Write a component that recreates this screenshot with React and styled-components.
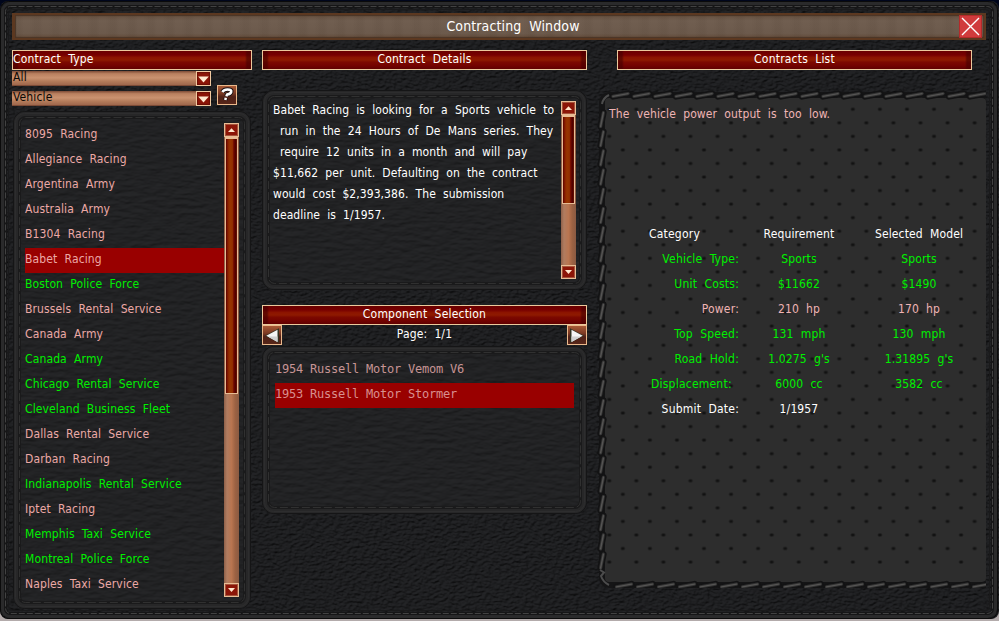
import React from "react";
import styled, { createGlobalStyle, css } from "styled-components";

const GlobalStyle = createGlobalStyle`
  * {
    box-sizing: border-box;
  }

  body {
    margin: 0;
    background: linear-gradient(#00061c 50%, #b3abab 50%);
    font-family: "DejaVu Sans Condensed", "DejaVu Sans", sans-serif;
    font-stretch: condensed;
    font-size: 12px;
    line-height: 21px;
    color: #fff;
  }
`;

const contracts = [
  ["8095 Racing", false],
  ["Allegiance Racing", false],
  ["Argentina Army", false],
  ["Australia Army", false],
  ["B1304 Racing", false],
  ["Babet Racing", false],
  ["Boston Police Force", true],
  ["Brussels Rental Service", false],
  ["Canada Army", false],
  ["Canada Army", true],
  ["Chicago Rental Service", true],
  ["Cleveland Business Fleet", true],
  ["Dallas Rental Service", false],
  ["Darban Racing", false],
  ["Indianapolis Rental Service", true],
  ["Iptet Racing", false],
  ["Memphis Taxi Service", true],
  ["Montreal Police Force", true],
  ["Naples Taxi Service", false],
];

const details = [
  "Babet Racing is looking for a Sports vehicle to",
  " run in the 24 Hours of De Mans series. They",
  " require 12 units in a month and will pay",
  "$11,662 per unit. Defaulting on the contract",
  "would cost $2,393,386. The submission",
  "deadline is 1/1957.",
];

const green = "#00f000";
const pink = "#f0b4b4";

const requirements = [
  ["Vehicle Type:", "Sports", "Sports", green],
  ["Unit Costs:", "$11662", "$1490", green],
  ["Power:", "210 hp", "170 hp", pink],
  ["Top Speed:", "131 mph", "130 mph", green],
  ["Road Hold:", "1.0275 g's", "1.31895 g's", green],
  ["Displacement: ", "6000 cc", "3582 cc", green],
  ["Submit Date:", "1/1957", "", "#fff"],
];

const Window = styled.div`
  position: relative;
  width: 999px;
  height: 621px;
  padding: 13px 13px 0 12px;
  overflow: hidden;
  white-space: pre;
  letter-spacing: 0.13px;
  word-spacing: 3.6px;
`;

const Backdrop = styled.svg`
  position: absolute;
  top: 0;
  left: 0;
  z-index: -1;
  display: block;
`;

const TitleBar = styled.div`
  display: flex;
  justify-content: flex-end;
  height: 27px;
  padding: 0 2px 0 0;
  border: 2px solid #5c3820;
  border-left-width: 3px;
  box-shadow: inset 1px 1px 1px #4a3526, inset -1px -1px 1px #4a3526;
  background: repeating-linear-gradient(
      90deg,
      rgba(40, 25, 15, 0.05) 0 5px,
      transparent 9px 14px,
      rgba(40, 25, 15, 0.04) 19px
    ),
    linear-gradient(#66503f, #705e50 25%, #6c5a4c 80%, #624b3a);
`;

const Title = styled.h1`
  flex: 1;
  margin: 0;
  padding-left: 52px;
  font-size: 14px;
  font-weight: normal;
  line-height: 23px;
  text-align: center;
`;

const Close = styled.button`
  width: 23px;
  height: 23px;
  padding: 0;
  border: 1px solid #b42a2a;
  background: #d03b3c;

  svg {
    display: block;
  }
`;

const Columns = styled.div`
  display: flex;
  align-items: flex-start;
  margin-top: 10px;
`;

const LeftColumn = styled.div`
  width: 240px;
`;

const MiddleColumn = styled.div`
  width: 325px;
  margin-left: 10px;
`;

const RightColumn = styled.div`
  width: 389px;
  margin-left: 10px;
`;

const Header = styled.h2`
  height: 20px;
  margin: 0;
  border: 1px solid #ecc99c;
  background: linear-gradient(
      90deg,
      rgba(70, 0, 0, 0.6) 0 4px,
      rgba(70, 0, 0, 0) 6px calc(100% - 6px),
      rgba(70, 0, 0, 0.6) calc(100% - 4px)
    ),
    linear-gradient(#6a0000, #780000 22%, #8c1400 36%, #8e1a00 50%, #7c0900 62%, #740300 80%, #600000);
  font-size: 12px;
  font-weight: normal;
  line-height: 17px;
  letter-spacing: 0.2px;
  text-align: ${(p) => (p.$left ? "left" : "center")};
`;

const ListHeader = styled(Header)`
  width: 355px;
  margin-left: 20px;
`;

const Filters = styled.div`
  display: flex;
  height: 41px;
`;

const Selects = styled.div`
  width: 199px;
  padding-top: 1px;
`;

const Select = styled.div`
  display: flex;
  justify-content: space-between;
  height: 15px;
  margin-bottom: 5px;
  padding-left: 1px;
  background: linear-gradient(#7c4a36, #b9805f 18%, #ca9270 45%, #b27a59 70%, #a16a4e 90%, #6a3b2a);
  color: #0c0805;
  line-height: 12px;
`;

const SelectArrow = styled.span`
  width: 15px;
  height: 15px;
  border: 1px solid #f0c9a0;
  background: #8b1507;
  box-shadow: inset 0 0 1px 1px #6b0e05;

  svg {
    display: block;
  }
`;

const IconButton = styled.button`
  width: 20px;
  height: 20px;
  padding: 0;
  border: 1px solid #eab98c;
  background: linear-gradient(#a95a35, #7c3a24 40%, #4f2117 60%, #572619);

  svg {
    display: block;
  }
`;

const HelpButton = styled(IconButton)`
  margin: 15px 0 0 6px;
`;

const Panel = styled.div`
  position: relative;
  display: flex;
  justify-content: space-between;
`;

const ContractPanel = styled(Panel)`
  width: 238px;
  height: 498px;
  padding: 12px 12px 0 12px;
  margin-left: 1px;
`;

const DetailPanel = styled(Panel)`
  height: 200px;
  margin-top: 20px;
  padding: 11px 11px 0 11px;
`;

const ComponentPanel = styled(Panel)`
  height: 168px;
  margin-top: 1px;
  padding: 12px 13px 0 13px;
`;

const RequirementPanel = styled(Panel)`
  flex-direction: column;
  justify-content: flex-start;
  height: 498px;
  margin-top: 20px;
  padding: 14px 0 0 12px;
`;

const List = styled.ul`
  flex: 1;
  margin: 0;
  padding: 0;
  list-style: none;
`;

const Item = styled.li`
  height: 25px;
  color: ${(p) => (p.$open ? green : "#eca9a6")};
  line-height: 23px;
  ${(p) => p.$selected && "background: #990000;"}
`;

const ComponentItem = styled(Item)`
  color: ${(p) => (p.$selected ? "#d88f8f" : "#c79494")};
  font-family: "DejaVu Sans Mono", monospace;
  font-stretch: normal;
  letter-spacing: -0.224px;
  word-spacing: 0;
`;

const Bar = styled.div`
  display: flex;
  flex-direction: column;
  width: 15px;
  height: ${(p) => p.$height}px;
  background: linear-gradient(90deg, #8e6049, #b07c60 20%, #b97550 50%, #9c6243 75%, #8a5a42);
`;

const BarArrow = styled.span`
  flex: none;
  height: 14px;
  border: 1px solid #e8bd95;
  background: #8b1507;
  box-shadow: inset 0 0 0 1px #a6523a;

  svg {
    display: block;
  }
`;

const Thumb = styled.span`
  height: ${(p) => p.$height}px;
  margin: 0 1px auto;
  border: 1px solid #e8bd95;
  border-top-width: 2px;
  background: linear-gradient(90deg, #5c0000, #8b2000 18%, #983500 35%, #923000 58%, #740a00 70%, #4e0000 85%, #6b1200);
`;

const Details = styled.div`
  margin-top: -1px;
  letter-spacing: 0.075px;
`;

const Line = styled.p`
  margin: 0;
`;

const Pager = styled.div`
  display: flex;
  justify-content: space-between;
  height: 20px;
  line-height: 18px;
`;

const ComponentHeader = styled(Header)`
  margin-top: 15px;
`;

const Table = styled.div`
  display: grid;
  grid-template-columns: 120px 120px 120px;
  grid-auto-rows: 25px;
  margin: 99px 0 0 10px;
  text-align: center;
`;

const Message = styled.p`
  margin: 0;
  color: ${pink};
`;

const cell = css`
  color: ${(p) => p.$color || "#fff"};
`;

const Label = styled.span`
  ${cell}
  letter-spacing: 0.22px;
  text-align: right;
`;

const Value = styled.span`
  ${cell}
`;

const CategoryLabel = styled(Label)`
  padding-right: 39px;
`;

function Leather() {
  return (
    <Backdrop width="999" height="621" viewBox="0 0 999 621">
      <defs>
        <filter id="leather" x="0" y="0" width="100%" height="100%" colorInterpolationFilters="sRGB">
          <feTurbulence type="fractalNoise" baseFrequency="0.22 0.4" numOctaves="4" seed="8" result="n" />
          <feDiffuseLighting in="n" surfaceScale="1.7" diffuseConstant="0.2" lightingColor="#b2b6c2">
            <feDistantLight azimuth="60" elevation="58" />
          </feDiffuseLighting>
        </filter>
        <clipPath id="window">
          <rect x="0" y="1" width="999" height="618" rx="8" />
        </clipPath>
      </defs>
      <g clipPath="url(#window)">
        <rect width="999" height="621" filter="url(#leather)" />
        <g fill="none">
          <rect x="0.5" y="1.5" width="997" height="617" rx="8" stroke="#0b0b0b" />
          <rect x="2.5" y="3.5" width="993" height="613" rx="8" stroke="#2a2a2b" strokeWidth="3" />
          <rect x="5.5" y="6.5" width="987" height="607" rx="5" stroke="#161617" strokeWidth="3" />
          <rect x="5.5" y="6.5" width="987" height="607" rx="5" stroke="#424242" strokeDasharray="6 2" />
          <rect x="8.5" y="9.5" width="981" height="601" rx="4" stroke="#1a1a1b" />
        </g>
      </g>
    </Backdrop>
  );
}

function SoftFrame({ width, height }) {
  return (
    <Backdrop width={width} height={height}>
      <defs>
        <filter id={`soft${height}`} x="0" y="0" width="100%" height="100%" colorInterpolationFilters="sRGB">
          <feTurbulence type="fractalNoise" baseFrequency="0.08 0.25" numOctaves="3" seed="3" result="n" />
          <feDiffuseLighting in="n" surfaceScale="0.9" diffuseConstant="0.215" lightingColor="#b4b7c0">
            <feDistantLight azimuth="70" elevation="60" />
          </feDiffuseLighting>
        </filter>
        <clipPath id={`clip${height}`}>
          <rect width={width} height={height} rx="12" />
        </clipPath>
      </defs>
      <g clipPath={`url(#clip${height})`}>
        <rect width={width} height={height} filter={`url(#soft${height})`} />
      </g>
      <g fill="none">
        <rect x="0.5" y="0.5" width={width - 1} height={height - 1} rx="11" stroke="#151516" />
        <rect x="3" y="3" width={width - 6} height={height - 6} rx="9" stroke="#272728" strokeWidth="4" />
        <rect x="2.5" y="2.5" width={width - 5} height={height - 5} rx="9" stroke="#2d2d2e" strokeWidth="1" />
        <rect x="6.5" y="6.5" width={width - 13} height={height - 13} rx="6" stroke="#1a1a1b" strokeWidth="3" />
        <rect x="6.5" y="6.5" width={width - 13} height={height - 13} rx="6" stroke="#303030" strokeDasharray="8 3" />
      </g>
    </Backdrop>
  );
}

function Stitch({ x, y, vertical }) {
  const d = vertical ? "M-1.4 7.5 L1.4 -6.5" : "M-8 1.4 L7 -1.4";
  return (
    <g transform={`translate(${x} ${y})`} fill="none" strokeLinecap="round">
      <path d={d} stroke="#131314" strokeWidth="6.5" />
      <path d={d} stroke="#333" strokeWidth="3.2" />
      <path d={d} stroke="#555453" strokeWidth="1.4" />
    </g>
  );
}

function PerforatedFrame() {
  const holes = (id, y) => (
    <pattern id={id} x="-1.2" y={y} width="27.06" height="27.1" patternUnits="userSpaceOnUse">
      <ellipse cx="13.5" cy="6.8" rx="2.5" ry="2" fill="#212121" />
      <ellipse cx="13.5" cy="6.8" rx="1.6" ry="1.2" fill="#121212" />
    </pattern>
  );
  const steps = (n) => Array.from({ length: n }, (_, i) => i);
  return (
    <Backdrop width="389" height="498">
      <defs>
        {holes("holesTop", 12.5)}
        {holes("holesBottom", 248.5)}
      </defs>
      <rect x="2" y="2" width="387" height="496" rx="10" fill="#151516" />
      <rect x="8" y="8" width="381" height="484" rx="4" fill="#2d2d2d" />
      <rect x="8" y="12" width="381" height="233" fill="url(#holesTop)" />
      <rect x="8" y="246" width="381" height="236" fill="url(#holesBottom)" />
      <g transform="translate(13.53 13.55)">
        <rect x="-5" y="-8" width="380.4" height="226" fill="url(#holesTop)" />
        <rect x="-5" y="234" width="380.4" height="233" fill="url(#holesBottom)" />
      </g>
      {steps(18).map((i) => (
        <Stitch key={i} x={24 + i * 21} y={5} />
      ))}
      {steps(18).map((i) => (
        <Stitch key={i} x={27.5 + i * 21} y={495.5} />
      ))}
      {steps(24).map((i) => (
        <Stitch key={i} x={5} y={29 + i * 19.2} vertical />
      ))}
      <path d="M5 14 Q6 8 12 5" fill="none" stroke="#4c4c4c" strokeWidth="2" />
      <path d="M3 480 L7 482.5 L4 486 Q6 492 12 495" fill="none" stroke="#4c4c4c" strokeWidth="2" />
    </Backdrop>
  );
}

function ScrollBar({ height, thumb }) {
  return (
    <Bar $height={height}>
      <BarArrow>
        <svg width="13" height="12">
          <path d="M3 8 L6.5 4.2 L10 8 Z" fill="#ffe6cc" />
        </svg>
      </BarArrow>
      <Thumb $height={thumb} />
      <BarArrow>
        <svg width="13" height="12">
          <path d="M3 4 L6.5 8 L10 4 Z" fill="#ffe6cc" />
        </svg>
      </BarArrow>
    </Bar>
  );
}

function Dropdown({ value }) {
  return (
    <Select>
      {value}
      <SelectArrow>
        <svg width="13" height="13">
          <path d="M1.2 4.4 H11.8 L6.5 10.4 Z" fill="#ffe9cf" />
        </svg>
      </SelectArrow>
    </Select>
  );
}

function Arrow({ right }) {
  return (
    <IconButton>
      <svg width="18" height="18">
        <g transform={right ? "translate(18 0) scale(-1 1)" : undefined}>
          <path d="M2 9.8 L16 2.2 V17 Z" fill="#332" />
          <path d="M3.3 9.8 L14.5 3.8 V16 Z" fill="#f5f5f5" />
          <path d="M5 10.5 L14.5 10.5 V16 Z" fill="#d0d0d0" />
        </g>
      </svg>
    </IconButton>
  );
}

export default function App() {
  return (
    <Window>
      <GlobalStyle />
      <Leather />
      <TitleBar>
        <Title>Contracting Window</Title>
        <Close>
          <svg width="21" height="21">
            <path d="M2 2 L19 19 M19 2 L2 19" stroke="#fff" strokeWidth="1.4" />
          </svg>
        </Close>
      </TitleBar>
      <Columns>
        <LeftColumn>
          <Header $left>Contract Type</Header>
          <Filters>
            <Selects>
              <Dropdown value="All" />
              <Dropdown value="Vehicle" />
            </Selects>
            <HelpButton>
              <svg width="18" height="18">
                <g fill="none" strokeLinejoin="round">
                  <path d="M4.3 6 Q6 3.5 9.5 3.5 Q14 3.5 13.2 6 Q12.6 8 9 8.6 L8.4 10.3 M7.8 12 L7.3 14" stroke="#1c1416" strokeWidth="4.4" />
                  <path d="M4.3 6 Q6 3.5 9.5 3.5 Q14 3.5 13.2 6 Q12.6 8 9 8.6 L8.4 10.3 M7.8 11.8 L7.3 14" stroke="#fff" strokeWidth="2.5" />
                </g>
              </svg>
            </HelpButton>
          </Filters>
          <ContractPanel>
            <SoftFrame width={238} height={498} />
            <List>
              {contracts.map(([name, open], i) => (
                <Item key={i} $open={open} $selected={i === 5}>
                  {name}
                </Item>
              ))}
            </List>
            <ScrollBar height={474} thumb={257} />
          </ContractPanel>
        </LeftColumn>
        <MiddleColumn>
          <Header>Contract Details</Header>
          <DetailPanel>
            <SoftFrame width={325} height={200} />
            <Details>
              {details.map((line) => (
                <Line key={line}>{line}</Line>
              ))}
            </Details>
            <ScrollBar height={178} thumb={89} />
          </DetailPanel>
          <ComponentHeader>Component Selection</ComponentHeader>
          <Pager>
            <Arrow />
            Page: 1/1
            <Arrow right />
          </Pager>
          <ComponentPanel>
            <SoftFrame width={325} height={168} />
            <List>
              <ComponentItem>1954 Russell Motor Vemom V6</ComponentItem>
              <ComponentItem $selected>1953 Russell Motor Stormer</ComponentItem>
            </List>
          </ComponentPanel>
        </MiddleColumn>
        <RightColumn>
          <ListHeader>Contracts List</ListHeader>
          <RequirementPanel>
            <PerforatedFrame />
            <Message>The vehicle power output is too low.</Message>
            <Table>
              <CategoryLabel>Category</CategoryLabel>
              <Value>Requirement</Value>
              <Value>Selected Model</Value>
              {requirements.map(([label, need, model, color]) => (
                <React.Fragment key={label}>
                  <Label $color={color}>{label}</Label>
                  <Value $color={color}>{need}</Value>
                  <Value $color={color}>{model}</Value>
                </React.Fragment>
              ))}
            </Table>
          </RequirementPanel>
        </RightColumn>
      </Columns>
    </Window>
  );
}
